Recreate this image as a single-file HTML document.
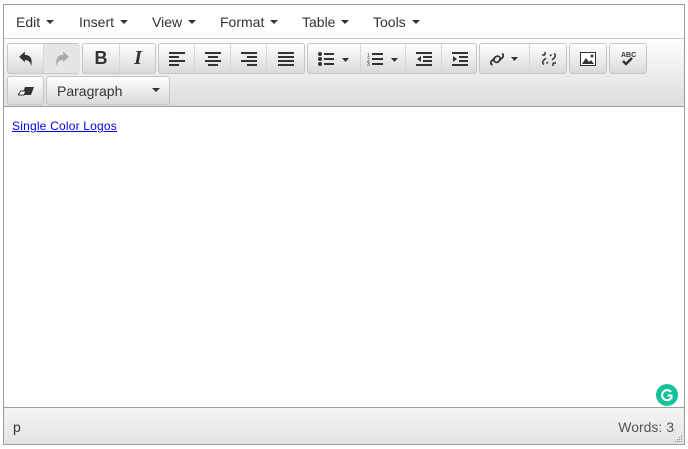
<!DOCTYPE html><html><head><style>
*{margin:0;padding:0;box-sizing:border-box}
body{width:688px;height:449px;background:#fff;font-family:"Liberation Sans",Arial,sans-serif;position:relative;overflow:hidden}
.ed{position:absolute;left:3px;top:4px;width:682px;height:441px;border:1px solid #9e9e9e}
.menu{position:absolute;left:0;top:0;width:680px;height:34px;background:#fff;border-bottom:1px solid #c5c5c5}
.mi{position:absolute;top:9px;font-size:14px;color:#333}
.car{display:inline-block;width:0;height:0;border-left:4px solid transparent;border-right:4px solid transparent;border-top:4px solid #333;vertical-align:middle;margin-left:6px;margin-top:-2px}
.tb{position:absolute;left:0;top:35px;width:680px;height:67px;background:linear-gradient(#fdfdfd,#ddd);border-bottom:1px solid #9e9e9e}
.g{position:absolute;border:1px solid #c5c5c5;border-radius:3px;background:linear-gradient(#fff,#d9d9d9);height:31px}
.b{position:absolute;top:0;height:29px;border-right:1px solid #d6d6d6;display:flex;align-items:center;justify-content:center}
.b:last-child{border-right:none}
.content{position:absolute;left:0;top:103px;width:680px;height:299px;background:#fff}
.content a{position:absolute;left:8px;top:11px;font-size:12px;letter-spacing:0.2px;color:#00e;text-decoration:underline;font-family:"Liberation Sans",sans-serif}
.st{position:absolute;left:0;top:402px;width:680px;height:37px;border-top:1px solid #9e9e9e;background:linear-gradient(#f5f5f5,#e3e3e3);font-size:14px;color:#333}
</style></head><body>
<div class="ed">
<div class="menu">
<span class="mi" style="left:12px">Edit<span class="car"></span></span>
<span class="mi" style="left:75px">Insert<span class="car"></span></span>
<span class="mi" style="left:148px">View<span class="car"></span></span>
<span class="mi" style="left:216px">Format<span class="car"></span></span>
<span class="mi" style="left:298px">Table<span class="car"></span></span>
<span class="mi" style="left:369px">Tools<span class="car"></span></span>
</div>
<div class="tb">
<div class="g" style="left:3px;top:3px;width:73px">
 <div class="b" style="left:0;width:36px"><svg width="16" height="16" viewBox="0 0 14 14"><path d="M1 5L6 0.5V3.5C11 3.5 13 7 11.5 13.5C11 9 9 8 6 8V10Z" fill="#333"/></svg></div>
 <div class="b" style="left:36px;width:36px;background:#e6e6e6"><svg width="16" height="16" viewBox="0 0 14 14"><path d="M13 5L8 0.5V3.5C3 3.5 1 7 2.5 13.5C3 9 5 8 8 8V10Z" fill="#aaa"/></svg></div>
</div>
<div class="g" style="left:78px;top:3px;width:74px">
 <div class="b" style="left:0;width:37px;font-weight:bold;font-size:18px;color:#333">B</div>
 <div class="b" style="left:37px;width:36px;font-style:italic;font-weight:bold;font-size:20px;color:#333;font-family:'Liberation Serif',serif">I</div>
</div>
<div class="g" style="left:154px;top:3px;width:147px">
 <div class="b" style="left:0;width:36px"><svg width="16" height="14"><path d="M0 1h16M0 5h10M0 9h16M0 13h10" stroke="#333" stroke-width="2"/></svg></div>
 <div class="b" style="left:36px;width:36px"><svg width="16" height="14"><path d="M0 1h16M3 5h10M0 9h16M3 13h10" stroke="#333" stroke-width="2"/></svg></div>
 <div class="b" style="left:72px;width:36px"><svg width="16" height="14"><path d="M0 1h16M6 5h10M0 9h16M6 13h10" stroke="#333" stroke-width="2"/></svg></div>
 <div class="b" style="left:108px;width:37px"><svg width="16" height="14"><path d="M0 1h16M0 5h16M0 9h16M0 13h16" stroke="#333" stroke-width="2"/></svg></div>
</div>
<div class="g" style="left:303px;top:3px;width:170px">
 <div class="b" style="left:0;width:53px"><svg width="32" height="14"><circle cx="2" cy="2" r="2" fill="#333"/><circle cx="2" cy="7" r="2" fill="#333"/><circle cx="2" cy="12" r="2" fill="#333"/><path d="M6 2h10M6 7h10M6 12h10" stroke="#333" stroke-width="2"/><path d="M24 6h7l-3.5 4z" fill="#333"/></svg></div>
 <div class="b" style="left:53px;width:45px"><svg width="32" height="14"><text x="0" y="5" font-size="5" fill="#333">1</text><text x="0" y="10" font-size="5" fill="#333">2</text><text x="0" y="14" font-size="5" fill="#333">3</text><path d="M5 2h11M5 7h11M5 12h11" stroke="#333" stroke-width="2"/><path d="M24 6h7l-3.5 4z" fill="#333"/></svg></div>
 <div class="b" style="left:98px;width:36px"><svg width="16" height="14"><path d="M0 1h16M7 5h9M7 9h9M0 13h16" stroke="#333" stroke-width="2"/><path d="M5 4v6l-4-3z" fill="#333"/></svg></div>
 <div class="b" style="left:134px;width:35px"><svg width="16" height="14"><path d="M0 1h16M7 5h9M7 9h9M0 13h16" stroke="#333" stroke-width="2"/><path d="M1 4v6l4-3z" fill="#333"/></svg></div>
</div>
<div class="g" style="left:475px;top:3px;width:88px">
 <div class="b" style="left:0;width:50px"><svg width="32" height="16"><path d="M3.5 14a2.5 2.5 0 0 1-1-4l4-4a2.5 2.5 0 0 1 4 3.5M13 2.5a2.5 2.5 0 0 1 0.5 4l-4 4a2.5 2.5 0 0 1-4-3.5" stroke="#333" stroke-width="1.8" fill="none"/><path d="M22 6h7l-3.5 4z" fill="#333"/></svg></div>
 <div class="b" style="left:50px;width:37px"><svg width="16" height="16"><path d="M3 13.5a2.5 2.5 0 0 1-0.5-4l2.5-2.5M13 2.5a2.5 2.5 0 0 1 0.5 4l-2.5 2.5M9 5l1.5-1.5M7 11l-1.5 1.5M1 4h3M4 1v3M12 15v-3M15 12h-3" stroke="#333" stroke-width="1.5" fill="none"/></svg></div>
</div>
<div class="g" style="left:565px;top:3px;width:38px"><div class="b" style="left:0;width:36px"><svg width="16" height="14"><rect x="0.5" y="0.5" width="15" height="13" fill="#fff" stroke="#333"/><path d="M2 12l4-6 3 4 2-2 3 4z" fill="#333"/><circle cx="12" cy="4" r="1.5" fill="#333"/></svg></div></div>
<div class="g" style="left:605px;top:3px;width:38px"><div class="b" style="left:0;width:36px"><svg width="16" height="17"><text x="1" y="7" font-size="7" font-weight="bold" fill="#333" font-family="Liberation Sans Narrow,Liberation Sans">ABC</text><path d="M3 11l3 3 6-6" stroke="#333" stroke-width="2.4" fill="none"/></svg></div></div>
<div class="g" style="left:3px;top:36px;width:37px;height:29px"><div class="b" style="left:0;width:35px;height:27px"><svg width="16" height="10"><path d="M4 9h9l3-8h-9z" fill="#333"/><path d="M0 9h6l2-4h-5z" fill="#fff" stroke="#333"/></svg></div></div>
<div class="g" style="left:42px;top:36px;width:124px;height:29px"><div class="b" style="left:0;width:122px;height:27px;justify-content:space-between;padding:0 9px 0 10px;font-size:14px;color:#333"><span>Paragraph</span><span class="car"></span></div></div>
</div>
<div class="content"><a>Single Color Logos</a>
<div style="position:absolute;left:652px;top:276px;width:22px;height:22px;border-radius:50%;background:#15c39a"><svg width="22" height="22"><path d="M15 8a5 5 0 1 0 0.5 5.5M11.5 11.5h4v3.5" stroke="#fff" stroke-width="2" fill="none"/></svg></div>
</div>
<div class="st"><span style="position:absolute;left:9px;top:11px">p</span><span style="position:absolute;right:10px;top:11px;color:#555">Words: 3</span>
<svg style="position:absolute;right:1px;bottom:1px" width="10" height="10"><g fill="#888"><rect x="8" y="2" width="1" height="1"/><rect x="6" y="4" width="1" height="1"/><rect x="8" y="4" width="1" height="1"/><rect x="4" y="6" width="1" height="1"/><rect x="6" y="6" width="1" height="1"/><rect x="8" y="6" width="1" height="1"/><rect x="2" y="8" width="1" height="1"/><rect x="4" y="8" width="1" height="1"/><rect x="6" y="8" width="1" height="1"/><rect x="8" y="8" width="1" height="1"/></g></svg></div>
</div>
</body></html>
